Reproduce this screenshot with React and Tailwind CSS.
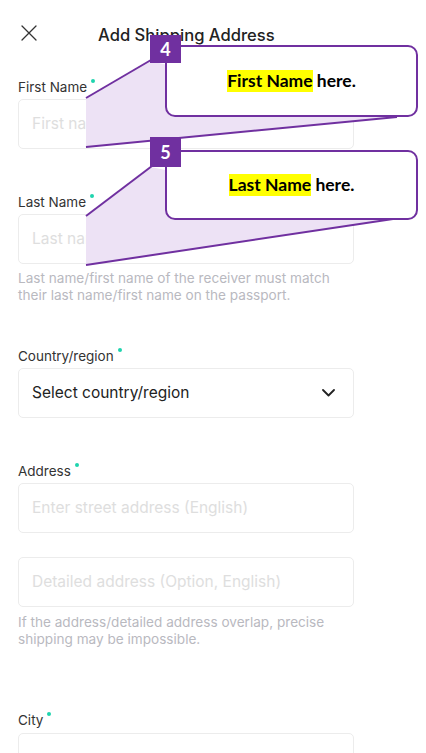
import React from 'react';

const font = { fontFamily: 'Inter, "Noto Sans", sans-serif' };

function Dot() {
  return <span className="inline-block w-[4px] h-[4px] rounded-full bg-[#1fd4ae] ml-[4px] align-top mt-[2px]" />;
}

function Label({ children, className = '' }) {
  return (
    <div className={`h-[20px] leading-[20px] text-[13.5px] text-[#333] ${className}`}>
      {children}
      <Dot />
    </div>
  );
}

function TextInput({ placeholder, className = '' }) {
  return (
    <div className={`h-[50px] border border-[#ececec] rounded-[5px] flex items-center px-[13px] ${className}`}>
      <span className="text-[15.5px] text-[#dedede] whitespace-nowrap overflow-hidden">{placeholder}</span>
    </div>
  );
}

function Help({ children, className = '' }) {
  return <p className={`text-[13.6px] leading-[17px] text-[#b9b9bf] ${className}`}>{children}</p>;
}

function Badge({ n, className }) {
  return (
    <div
      className={`absolute w-[31px] bg-[#7030a0] text-white flex items-center justify-center text-[18px] font-bold ${className}`}
      style={{ fontFamily: 'Lato, "Open Sans", sans-serif' }}
    >
      {n}
    </div>
  );
}

function Callout({ bold, className }) {
  return (
    <div
      className={`absolute left-[165px] w-[253px] border-2 border-[#7030a0] rounded-[10px] bg-white flex items-center justify-center text-[17.5px] font-bold text-black ${className}`}
      style={{ fontFamily: 'Lato, "Open Sans", sans-serif' }}
    >
      <span>
        <span className="bg-[#ffff00] leading-[22px] inline-block">{bold}</span> here.
      </span>
    </div>
  );
}

export default function App() {
  return (
    <div className="relative w-[426px] h-[753px] bg-white overflow-hidden" style={font}>
      <div className="pl-[18px] w-[354px]">
        <div className="flex items-center h-[16px] mt-[25px]">
          <svg className="ml-[3px] shrink-0" width="16" height="16" viewBox="0 0 16 16" fill="none">
            <path d="M1 1L15 15M15 1L1 15" stroke="#333" strokeWidth="1.3" strokeLinecap="round" />
          </svg>
          <div className="ml-[61px] mt-[4px] text-[16.6px] font-medium text-[#222] whitespace-nowrap">Add Shipping Address</div>
        </div>

        <Label className="mt-[36px]">First Name</Label>
        <TextInput className="mt-[2px]" placeholder="First name" />

        <Label className="mt-[43px]">Last Name</Label>
        <TextInput className="mt-[2px]" placeholder="Last name" />
        <Help className="mt-[6px]">
          Last name/first name of the receiver must match their last name/first name on the passport.
        </Help>

        <Label className="mt-[42px]">Country/region</Label>
        <div className="mt-[2px] h-[50px] border border-[#ececec] rounded-[5px] flex items-center justify-between pl-[13px] pr-[18px]">
          <span className="text-[15.5px] text-[#222]">Select country/region</span>
          <svg width="13" height="8" viewBox="0 0 13 8" fill="none">
            <path d="M1 1L6.5 6.5L12 1" stroke="#222" strokeWidth="1.8" strokeLinecap="round" strokeLinejoin="round" />
          </svg>
        </div>

        <Label className="mt-[43px]">Address</Label>
        <TextInput className="mt-[2px]" placeholder="Enter street address (English)" />
        <TextInput className="mt-[24px]" placeholder="Detailed address (Option, English)" />
        <Help className="mt-[7px]">
          If the address/detailed address overlap, precise shipping may be impossible.
        </Help>

        <Label className="mt-[62px]">City</Label>
        <TextInput className="mt-[3px]" placeholder="" />
      </div>

      <svg className="absolute left-0 top-0 pointer-events-none" width="426" height="753" viewBox="0 0 426 753">
        <polygon points="86,98 150,61 397,117 86,147" fill="#ede2f5" />
        <line x1="86" y1="98" x2="151" y2="60" stroke="#7030a0" strokeWidth="2" />
        <line x1="86" y1="147" x2="397" y2="117" stroke="#7030a0" strokeWidth="2" />
        <polygon points="86,216 151,167 393,219 86,265" fill="#ede2f5" />
        <line x1="86" y1="216" x2="152" y2="166" stroke="#7030a0" strokeWidth="2" />
        <line x1="86" y1="265" x2="393" y2="219" stroke="#7030a0" strokeWidth="2" />
      </svg>

      <Callout bold="First Name" className="top-[45px] h-[72px]" />
      <Callout bold="Last Name" className="top-[150px] h-[70px]" />
      <Badge n="4" className="left-[150px] top-[35px] h-[28px]" />
      <Badge n="5" className="left-[150px] top-[137px] h-[30px]" />
    </div>
  );
}
